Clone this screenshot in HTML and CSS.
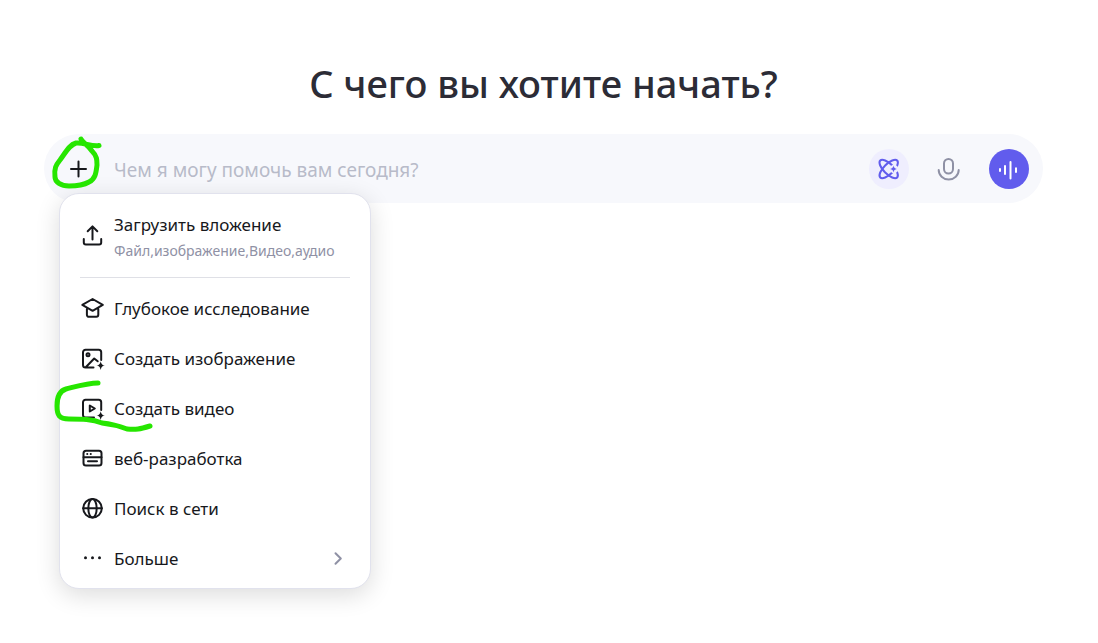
FILE: index.html
```html
<!DOCTYPE html>
<html lang="ru">
<head>
    <meta charset="UTF-8">
    <meta name="viewport" content="width=device-width, initial-scale=1.0">
    <title>С чего вы хотите начать?</title>
    <link rel="stylesheet" href="styles.css">
</head>
<body>
    <main class="page">
        <h1 class="title">С чего вы хотите начать?</h1>

        <form class="composer">
            <button type="button" class="icon_btn" aria-label="Добавить">
                <svg width="24" height="24" viewBox="0 0 24 24"><path d="M12.5 4.5v15M5 12h15"/></svg>
            </button>
            <input class="prompt" type="text" aria-label="Сообщение" placeholder="Чем я могу помочь вам сегодня?">
            <div class="actions">
                <button type="button" class="icon_btn think" aria-label="Размышление">
                    <svg width="24" height="24" viewBox="0 0 24 24">
                        <ellipse cx="11.700" cy="12" rx="12" ry="5" transform="rotate(45 11.700 12)"/>
                        <ellipse cx="11.700" cy="12" rx="12" ry="5" transform="rotate(-45 11.700 12)"/>
                        <circle class="gap" cx="17" cy="12" r="4.300"/>
                        <path class="solid" d="M16.500 8.600c.5 2.200 1.200 2.900 3.400 3.400-2.200.5-2.900 1.200-3.400 3.400-.5-2.200-1.200-2.900-3.400-3.400 2.200-.5 2.900-1.200 3.400-3.400z"/>
                    </svg>
                </button>
                <button type="button" class="icon_btn mic" aria-label="Диктовка">
                    <svg width="24" height="24" viewBox="0 0 24 24"><rect x="7" y="2" width="9" height="14.500" rx="4.500"/><path d="M1.700 13a10 9.500 0 0 0 20 0"/></svg>
                </button>
                <button type="button" class="icon_btn voice" aria-label="Голосовой режим">
                    <svg width="24" height="24" viewBox="0 0 24 24"><path d="M3 12v2M8 9v8M13.500 5v16.500M19 11.300v3.700"/></svg>
                </button>
            </div>

            <div class="menu">
                <button type="button" class="item upload">
                    <svg width="24" height="24" viewBox="0 0 24 24"><path d="M3.800 13v3.500a2 2 0 0 0 2 2h13.400a2 2 0 0 0 2-2V13M12.500 13.500V.7M7.700 5.200 12.500.4l4.800 4.800"/></svg>
                    <span class="label">Загрузить вложение<small>Файл,изображение,Видео,аудио</small></span>
                </button>
                <hr class="line">
                <button type="button" class="item">
                    <svg width="24" height="24" viewBox="0 0 24 24"><path d="M12.600 2 22.800 7.900 12.600 13.800 2.300 7.900zM6.900 12v5.800a2 2 0 0 0 2 2h7.400a2 2 0 0 0 2-2V12"/></svg>
                    <span class="label">Глубокое исследование</span>
                </button>
                <button type="button" class="item">
                    <svg width="24" height="24" viewBox="0 0 24 24">
                        <path d="M13.500 20.500H5.500A2.500 2.500 0 0 1 3 18V5.200a2.500 2.500 0 0 1 2.500-2.500h13.200a2.500 2.500 0 0 1 2.500 2.500V13M6 20l8.200-8.500 3.500 2.800"/>
                        <circle cx="8" cy="7.800" r="1.500"/>
                        <path class="solid" d="M20.700 14.200c.7 3 1.500 3.800 4.300 4.400-2.800.6-3.600 1.400-4.300 4.400-.7-3-1.500-3.800-4.300-4.400 2.800-.6 3.600-1.400 4.300-4.400z"/>
                    </svg>
                    <span class="label">Создать изображение</span>
                </button>
                <button type="button" class="item">
                    <svg width="24" height="24" viewBox="0 0 24 24">
                        <path d="M14 20.500H5.500A2.500 2.500 0 0 1 3 18V5.200a2.500 2.500 0 0 1 2.500-2.500h13.200a2.500 2.500 0 0 1 2.500 2.500V13M9.800 8.500v6l5-3z"/>
                        <path class="solid" d="M20.700 14.200c.7 3 1.500 3.800 4.300 4.400-2.800.6-3.600 1.400-4.300 4.400-.7-3-1.500-3.800-4.300-4.400 2.800-.6 3.600-1.400 4.300-4.400z"/>
                    </svg>
                    <span class="label">Создать видео</span>
                </button>
                <button type="button" class="item">
                    <svg width="24" height="24" viewBox="0 0 24 24"><rect x="3.500" y="3.800" width="18" height="14.800" rx="2.500"/><path d="M3.500 10.300h18M8 14.300h9M7.200 7h.1M10.700 7h.1"/></svg>
                    <span class="label">веб-разработка</span>
                </button>
                <button type="button" class="item">
                    <svg width="24" height="24" viewBox="0 0 24 24"><circle cx="12.500" cy="11.300" r="9.300"/><ellipse cx="12.500" cy="11.300" rx="4.200" ry="9.300"/><path d="M3.200 11.300h18.600"/></svg>
                    <span class="label">Поиск в сети</span>
                </button>
                <button type="button" class="item">
                    <svg width="24" height="24" viewBox="0 0 24 24"><g class="solid"><circle cx="5.500" cy="10.800" r="1.500"/><circle cx="12.500" cy="10.800" r="1.500"/><circle cx="19.500" cy="10.800" r="1.500"/></g></svg>
                    <span class="label">Больше</span>
                    <svg class="arrow" width="24" height="24" viewBox="0 0 24 24"><path d="m9.500 6.200 5.300 5.300-5.300 5.300"/></svg>
                </button>
            </div>

            <!-- hand drawn marks over the plus button and the video item -->
            <svg class="marks" width="120" height="310" viewBox="0 0 120 310">
                <path d="M37 5C39 9 44 11 48 17c5 5 5 9 5 14-1 9-2 14-8 17-7 4-14 4-20 4-8 0-14-4-14-9-1-9 1-12 5-17 6-8 9-15 16-17 7-1 16 4 23 2.500"/>
                <path d="M54 249c-10 0-20 3-32 6-7 2-9 8-9 17 0 9 2 13 12 13 13 0 23 0 33 4 10 1 17 3 25 6 9 1 13 0 23-3"/>
            </svg>
        </form>
    </main>
</body>
</html>
```

FILE: styles.css
```css
* {
    box-sizing: border-box;
}
body {
    margin: 0;
    background-color: #fff;
    color: #17181c;
    font-family: "Segoe UI", "Noto Sans", sans-serif;
}
.page {
    min-height: 100vh;
    padding: 55px 55px 0 44px;
}
.title {
    margin: 0 0 23px;
    color: #2c2c36;
    font-size: 38px;
    line-height: 56px;
    font-weight: 500;
    text-align: center;
}
button {
    padding: 0;
    border: 0;
    background: none;
    color: inherit;
    font: inherit;
    cursor: pointer;
}
svg {
    flex: none;
    overflow: visible;
    fill: none;
    stroke: currentColor;
    stroke-width: 2;
    stroke-linecap: round;
    stroke-linejoin: round;
}
.solid {
    fill: currentColor;
    stroke: none;
}
.gap {
    fill: #efeefe;
    stroke: none;
}
.composer {
    position: relative;
    display: flex;
    align-items: center;
    gap: 16px;
    padding: 14px;
    border-radius: 35px;
    background-color: #f7f8fc;
}
.icon_btn {
    display: flex;
    align-items: center;
    justify-content: center;
    width: 40px;
    height: 40px;
    border-radius: 50%;
}
.prompt {
    flex: 1;
    min-width: 0;
    height: 41px;
    padding: 2px 0 0;
    border: 0;
    outline: 0;
    background: none;
    color: #2c2c36;
    font: inherit;
    font-size: 19px;
}
.prompt::placeholder {
    color: #b8bbc9;
    opacity: 1;
}
.actions {
    display: flex;
    gap: 20px;
}
.think {
    background-color: #efeefe;
    color: #615ced;
}
.mic {
    color: #8f91a5;
}
.voice {
    background-color: #615ced;
    color: #fff;
}

/* menu */
.menu {
    position: absolute;
    top: 59px;
    left: 15px;
    width: 312px;
    padding: 4px 20px;
    border: 1px solid #e1e2ed;
    border-radius: 20px;
    background-color: #fff;
    box-shadow: 0 6px 24px rgba(0, 0, 0, 0.14);
}
.item {
    display: flex;
    align-items: center;
    gap: 10px;
    width: 100%;
    height: 50px;
    font-size: 17px;
    line-height: 26px;
    text-align: left;
}
.upload {
    height: 79px;
}
.label {
    flex: 1;
}
.label small {
    display: block;
    color: #8f91a5;
    font-size: 14px;
}
.line {
    margin: 0 0 6px;
    border: 0;
    border-top: 1px solid #dfe0e6;
}
.arrow {
    color: #8f91a5;
}
.marks {
    position: absolute;
    top: 0;
    left: 0;
    color: #26e600;
    stroke-width: 5;
    pointer-events: none;
}
```
